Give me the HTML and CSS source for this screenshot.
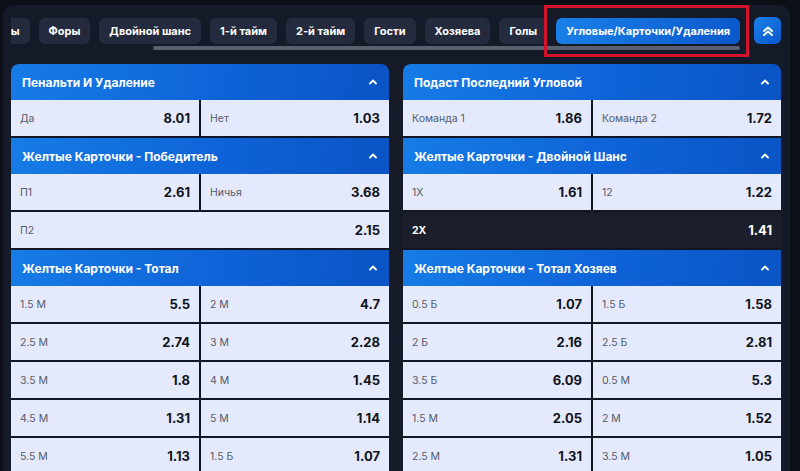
FILE: index.html
```html
<!DOCTYPE html>
<html lang="ru">
<head>
    <meta charset="UTF-8">
    <meta name="viewport" content="width=device-width, initial-scale=1.0">
    <title>Угловые/Карточки/Удаления</title>
<link rel="stylesheet" href="styles.css">
</head>
<body>
    <div class="panel">
        <div class="top">
            <div class="scroller">
                <div class="chips">
                    <button class="chip">Тоталы</button>
                    <button class="chip">Форы</button>
                    <button class="chip">Двойной шанс</button>
                    <button class="chip">1-й тайм</button>
                    <button class="chip">2-й тайм</button>
                    <button class="chip">Гости</button>
                    <button class="chip">Хозяева</button>
                    <button class="chip">Голы</button>
                    <button class="chip active">Угловые/Карточки/Удаления</button>
                </div>
                <div class="thumb"></div>
            </div>
            <button class="collapse">
                <svg width="14" height="14" viewBox="0 0 14 14"><path d="M3 7 L7 3.5 L11 7 M3 11 L7 7.5 L11 11" fill="none" stroke="#fff" stroke-width="2" stroke-linecap="round" stroke-linejoin="round"/></svg>
            </button>
        </div>

        <div class="markets">
            <div class="col">
                <section class="market">
                    <div class="head"><span>Пенальти И Удаление</span><svg class="chev" width="10" height="10" viewBox="0 0 10 10"><path d="M2 6.5 L5 3.5 L8 6.5"/></svg></div>
                    <div class="odds">
                        <div class="odd"><span class="lbl">Да</span><span class="val">8.01</span></div>
                        <div class="odd"><span class="lbl">Нет</span><span class="val">1.03</span></div>
                    </div>
                </section>
                <section class="market">
                    <div class="head"><span>Желтые Карточки - Победитель</span><svg class="chev" width="10" height="10" viewBox="0 0 10 10"><path d="M2 6.5 L5 3.5 L8 6.5"/></svg></div>
                    <div class="odds">
                        <div class="odd"><span class="lbl">П1</span><span class="val">2.61</span></div>
                        <div class="odd"><span class="lbl">Ничья</span><span class="val">3.68</span></div>
                        <div class="odd wide"><span class="lbl">П2</span><span class="val">2.15</span></div>
                    </div>
                </section>
                <section class="market">
                    <div class="head"><span>Желтые Карточки - Тотал</span><svg class="chev" width="10" height="10" viewBox="0 0 10 10"><path d="M2 6.5 L5 3.5 L8 6.5"/></svg></div>
                    <div class="odds">
                        <div class="odd"><span class="lbl">1.5 М</span><span class="val">5.5</span></div>
                        <div class="odd"><span class="lbl">2 М</span><span class="val">4.7</span></div>
                        <div class="odd"><span class="lbl">2.5 М</span><span class="val">2.74</span></div>
                        <div class="odd"><span class="lbl">3 М</span><span class="val">2.28</span></div>
                        <div class="odd"><span class="lbl">3.5 М</span><span class="val">1.8</span></div>
                        <div class="odd"><span class="lbl">4 М</span><span class="val">1.45</span></div>
                        <div class="odd"><span class="lbl">4.5 М</span><span class="val">1.31</span></div>
                        <div class="odd"><span class="lbl">5 М</span><span class="val">1.14</span></div>
                        <div class="odd"><span class="lbl">5.5 М</span><span class="val">1.13</span></div>
                        <div class="odd"><span class="lbl">1.5 Б</span><span class="val">1.07</span></div>
                    </div>
                </section>
            </div>

            <div class="col">
                <section class="market">
                    <div class="head"><span>Подаст Последний Угловой</span><svg class="chev" width="10" height="10" viewBox="0 0 10 10"><path d="M2 6.5 L5 3.5 L8 6.5"/></svg></div>
                    <div class="odds">
                        <div class="odd"><span class="lbl">Команда 1</span><span class="val">1.86</span></div>
                        <div class="odd"><span class="lbl">Команда 2</span><span class="val">1.72</span></div>
                    </div>
                </section>
                <section class="market">
                    <div class="head"><span>Желтые Карточки - Двойной Шанс</span><svg class="chev" width="10" height="10" viewBox="0 0 10 10"><path d="M2 6.5 L5 3.5 L8 6.5"/></svg></div>
                    <div class="odds">
                        <div class="odd"><span class="lbl">1X</span><span class="val">1.61</span></div>
                        <div class="odd"><span class="lbl">12</span><span class="val">1.22</span></div>
                        <div class="odd wide picked"><span class="lbl">2X</span><span class="val">1.41</span></div>
                    </div>
                </section>
                <section class="market">
                    <div class="head"><span>Желтые Карточки - Тотал Хозяев</span><svg class="chev" width="10" height="10" viewBox="0 0 10 10"><path d="M2 6.5 L5 3.5 L8 6.5"/></svg></div>
                    <div class="odds">
                        <div class="odd"><span class="lbl">0.5 Б</span><span class="val">1.07</span></div>
                        <div class="odd"><span class="lbl">1.5 Б</span><span class="val">1.58</span></div>
                        <div class="odd"><span class="lbl">2 Б</span><span class="val">2.16</span></div>
                        <div class="odd"><span class="lbl">2.5 Б</span><span class="val">2.81</span></div>
                        <div class="odd"><span class="lbl">3.5 Б</span><span class="val">6.09</span></div>
                        <div class="odd"><span class="lbl">0.5 М</span><span class="val">5.3</span></div>
                        <div class="odd"><span class="lbl">1.5 М</span><span class="val">2.05</span></div>
                        <div class="odd"><span class="lbl">2 М</span><span class="val">1.52</span></div>
                        <div class="odd"><span class="lbl">2.5 М</span><span class="val">1.31</span></div>
                        <div class="odd"><span class="lbl">3.5 М</span><span class="val">1.05</span></div>
                    </div>
                </section>
            </div>
        </div>

        <div class="mark"></div>
    </div>
</body>
</html>
```

FILE: styles.css
```css
*{
    margin:0;
    padding:0;
    box-sizing: border-box;
}
html,body{
    height: 100%;
    overflow: hidden;
}
body{
    background: #0c0f18;
    font-family: "Inter", "Noto Sans", sans-serif;
    color: #fff;
}
.panel{
    position: relative;
    margin: 5px 10px 0 3px;
    padding: 12px 9px 0 8px;
    height: 100%;
    background: #151a28;
    border-radius: 10px 10px 0 0;
}
.top{
    display: flex;
    align-items: flex-start;
    gap: 10px;
}
.scroller{
    flex: 1;
    overflow: hidden;
    padding-top: 1px;
}
.chips{
    display: flex;
    gap: 9px;
    margin-left: -42px;
}
.chip{
    flex: none;
    height: 26px;
    padding: 0 10px;
    border: none;
    border-radius: 6px;
    background: #252b3e;
    color: #fff;
    font-family: inherit;
    font-size: 11px;
    font-weight: 700;
    white-space: nowrap;
}
.chip.active{
    background: linear-gradient(100deg, #1a80e8, #0b58cc);
}
.thumb{
    width: 587px;
    height: 4px;
    margin: 2px 0 0 142px;
    border-radius: 2px;
    background: #5b6070;
}
.collapse{
    flex: none;
    width: 27px;
    height: 27px;
    border: none;
    border-radius: 6px;
    background: linear-gradient(140deg, #1a80e8, #0b58cc);
    display: flex;
    align-items: center;
    justify-content: center;
}
.markets{
    display: grid;
    grid-template-columns: 1fr 1fr;
    gap: 14px;
    margin-top: 14px;
}
.col{
    background: #121622;
    border-radius: 8px 8px 0 0;
    overflow: hidden;
}
.head{
    height: 36px;
    padding: 0 11px;
    display: flex;
    align-items: center;
    justify-content: space-between;
    background: linear-gradient(100deg, #167ce6 0%, #0e63d8 55%, #0a54c4 100%);
    font-size: 12px;
    font-weight: 700;
}
.chev path{
    fill: none;
    stroke: #fff;
    stroke-width: 1.8;
    stroke-linecap: round;
    stroke-linejoin: round;
}
.odds{
    display: grid;
    grid-template-columns: 1fr 1fr;
    gap: 2px;
    padding-bottom: 2px;
}
.odd{
    height: 36px;
    padding: 0 9px;
    display: flex;
    align-items: center;
    justify-content: space-between;
    background: #e4eafb;
}
.odd.wide{
    grid-column: span 2;
}
.lbl{
    font-size: 10.5px;
    color: #555b6b;
}
.val{
    font-size: 13px;
    font-weight: 700;
    color: #10131b;
}
.picked{
    background: #1c1f2b;
}
.picked .lbl,
.picked .val{
    color: #fff;
    font-weight: 700;
}
.mark{
    position: absolute;
    left: 541px;
    top: 0;
    width: 205px;
    height: 52px;
    border: 3px solid #d3122b;
}
```
